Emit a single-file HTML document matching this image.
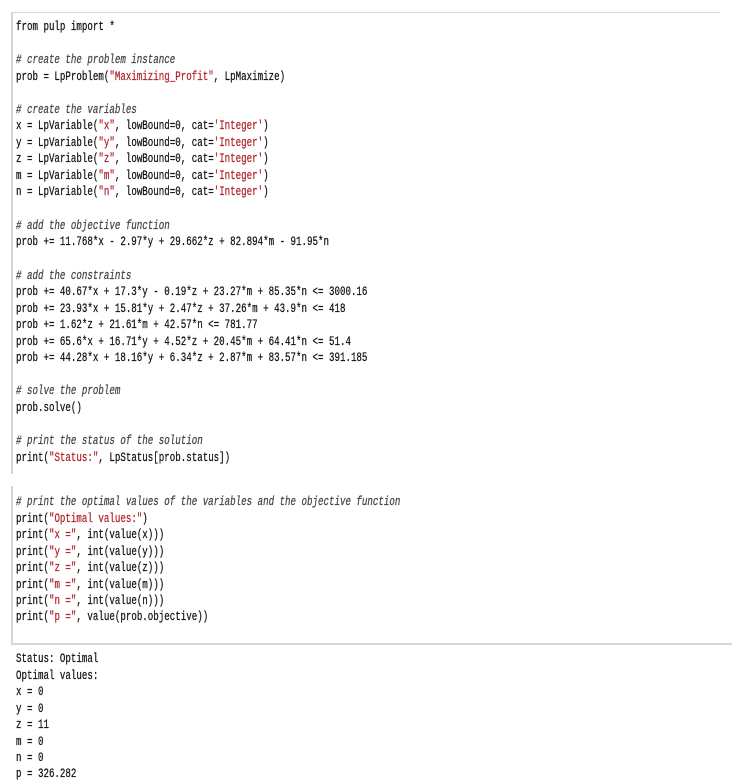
<!DOCTYPE html>
<html><head><meta charset="utf-8"><style>
body{margin:0;width:741px;height:784px;background:#fff;position:relative;overflow:hidden}
.l{position:absolute;left:16px;white-space:pre;font-family:"Liberation Mono",monospace;font-size:12.5px;line-height:16px;color:#111;transform:scaleX(0.732);transform-origin:0 50%;-webkit-text-stroke:0.25px}
.c{color:#444;font-style:italic}
.s{color:#b0232a}
.b{position:absolute;background:#d6d6d6}
</style></head><body>
<div class="b" style="left:11px;top:12px;width:709px;height:1px"></div>
<div class="b" style="left:11px;top:643px;width:721px;height:2px"></div>
<div class="b" style="left:11px;top:12px;width:2px;height:462px"></div>
<div class="b" style="left:11px;top:486px;width:2px;height:158px"></div>

<div class="l" style="top:19px">from pulp import *</div>
<div class="l c" style="top:52px"># create the problem instance</div>
<div class="l" style="top:69px">prob = LpProblem(<span class="s">"Maximizing_Profit"</span>, LpMaximize)</div>
<div class="l c" style="top:102px"># create the variables</div>
<div class="l" style="top:118px">x = LpVariable(<span class="s">"x"</span>, lowBound=0, cat=<span class="s">'Integer'</span>)</div>
<div class="l" style="top:135px">y = LpVariable(<span class="s">"y"</span>, lowBound=0, cat=<span class="s">'Integer'</span>)</div>
<div class="l" style="top:151px">z = LpVariable(<span class="s">"z"</span>, lowBound=0, cat=<span class="s">'Integer'</span>)</div>
<div class="l" style="top:168px">m = LpVariable(<span class="s">"m"</span>, lowBound=0, cat=<span class="s">'Integer'</span>)</div>
<div class="l" style="top:184px">n = LpVariable(<span class="s">"n"</span>, lowBound=0, cat=<span class="s">'Integer'</span>)</div>
<div class="l c" style="top:218px"># add the objective function</div>
<div class="l" style="top:234px">prob += 11.768*x - 2.97*y + 29.662*z + 82.894*m - 91.95*n</div>
<div class="l c" style="top:268px"># add the constraints</div>
<div class="l" style="top:284px">prob += 40.67*x + 17.3*y - 0.19*z + 23.27*m + 85.35*n &lt;= 3000.16</div>
<div class="l" style="top:301px">prob += 23.93*x + 15.81*y + 2.47*z + 37.26*m + 43.9*n &lt;= 418</div>
<div class="l" style="top:317px">prob += 1.62*z + 21.61*m + 42.57*n &lt;= 781.77</div>
<div class="l" style="top:334px">prob += 65.6*x + 16.71*y + 4.52*z + 20.45*m + 64.41*n &lt;= 51.4</div>
<div class="l" style="top:350px">prob += 44.28*x + 18.16*y + 6.34*z + 2.87*m + 83.57*n &lt;= 391.185</div>
<div class="l c" style="top:383px"># solve the problem</div>
<div class="l" style="top:400px">prob.solve()</div>
<div class="l c" style="top:433px"># print the status of the solution</div>
<div class="l" style="top:450px">print(<span class="s">"Status:"</span>, LpStatus[prob.status])</div>
<div class="l c" style="top:494px"># print the optimal values of the variables and the objective function</div>
<div class="l" style="top:511px">print(<span class="s">"Optimal values:"</span>)</div>
<div class="l" style="top:527px">print(<span class="s">"x ="</span>, int(value(x)))</div>
<div class="l" style="top:544px">print(<span class="s">"y ="</span>, int(value(y)))</div>
<div class="l" style="top:560px">print(<span class="s">"z ="</span>, int(value(z)))</div>
<div class="l" style="top:577px">print(<span class="s">"m ="</span>, int(value(m)))</div>
<div class="l" style="top:593px">print(<span class="s">"n ="</span>, int(value(n)))</div>
<div class="l" style="top:609px">print(<span class="s">"p ="</span>, value(prob.objective))</div>

<div class="l" style="top:651px">Status: Optimal</div>
<div class="l" style="top:668px">Optimal values:</div>
<div class="l" style="top:684px">x = 0</div>
<div class="l" style="top:701px">y = 0</div>
<div class="l" style="top:717px">z = 11</div>
<div class="l" style="top:734px">m = 0</div>
<div class="l" style="top:750px">n = 0</div>
<div class="l" style="top:766px">p = 326.282</div>
</body></html>
